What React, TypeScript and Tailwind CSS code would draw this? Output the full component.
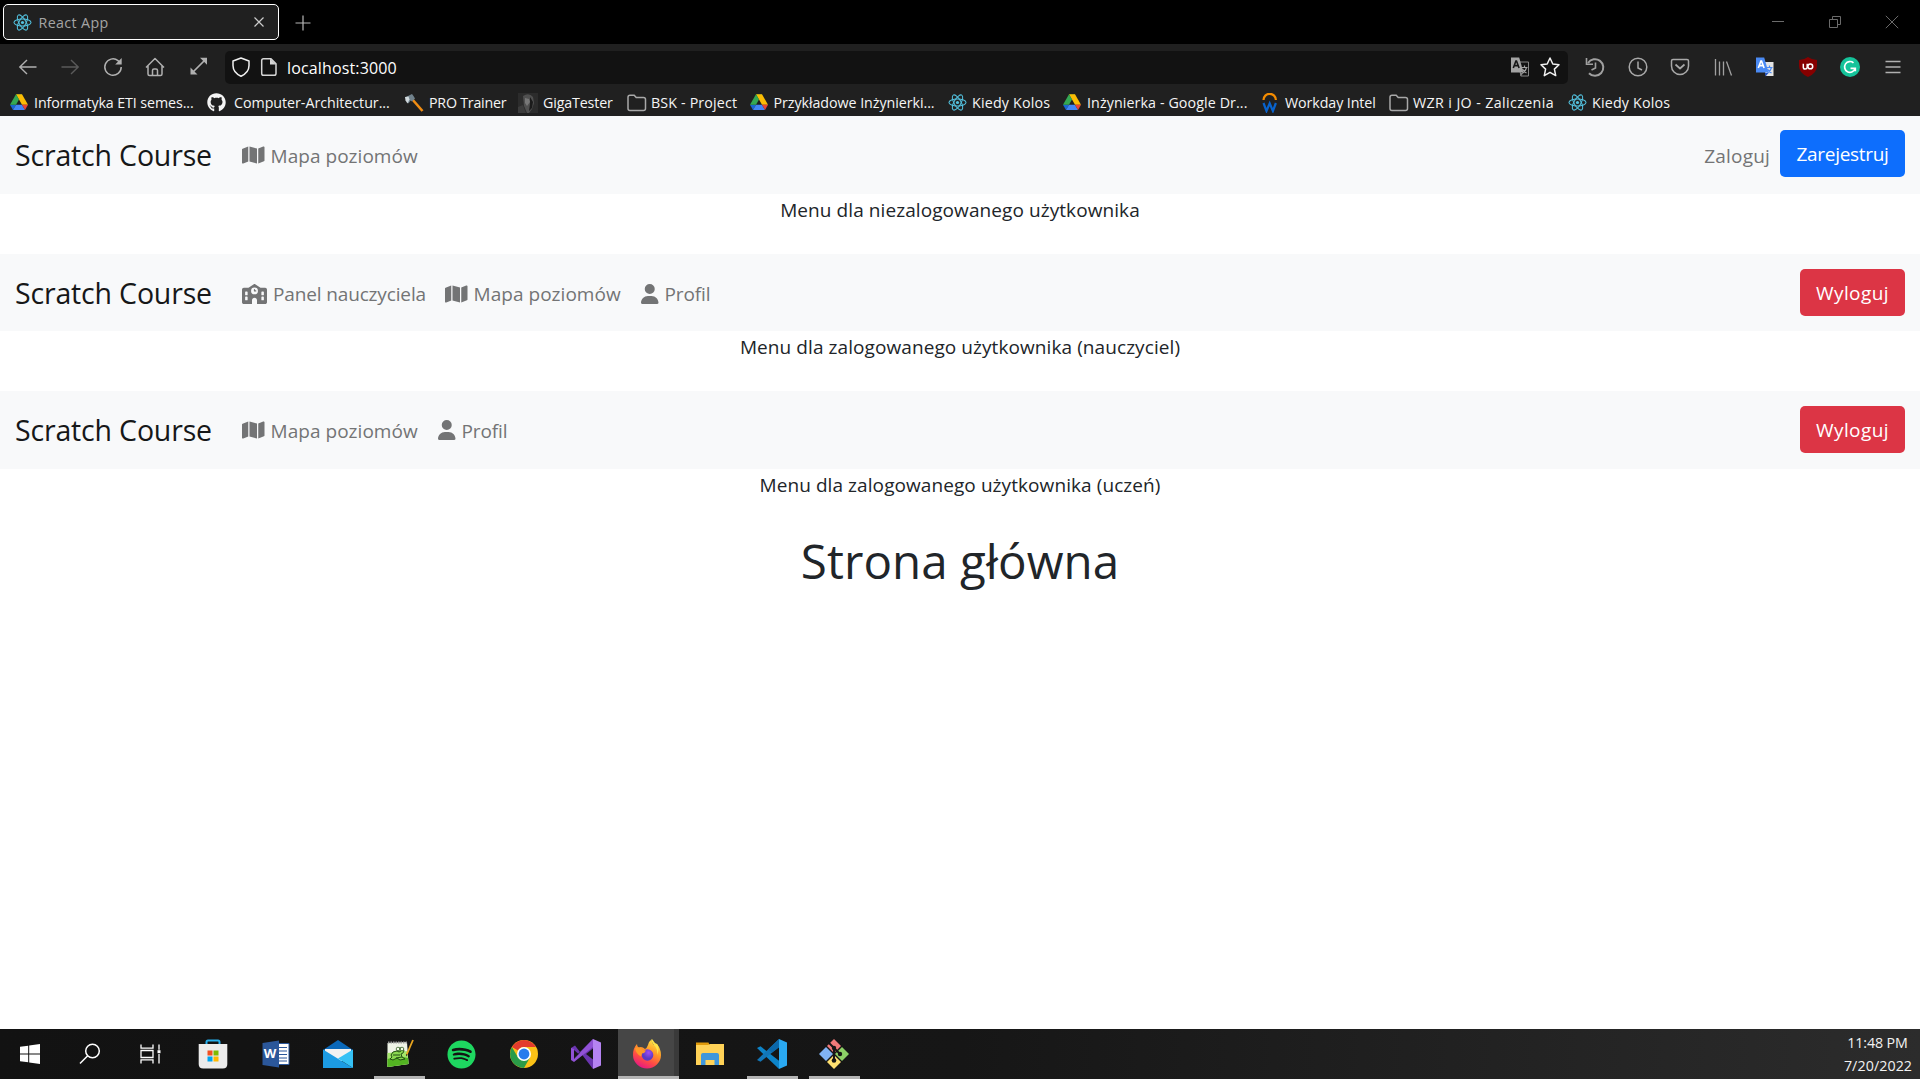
import React from 'react';
import { FaGithub, FaMap, FaSchool, FaSpotify, FaUser } from 'react-icons/fa6';

type SvgProps = { className?: string };

function ReactLogo({ className = 'size-[19px]' }: SvgProps) {
  return (
    <svg viewBox="0 0 20 20" className={className} fill="none" stroke="#53c1de" strokeWidth="1.1">
      <ellipse cx="10" cy="10" rx="9" ry="3.6" />
      <ellipse cx="10" cy="10" rx="9" ry="3.6" transform="rotate(60 10 10)" />
      <ellipse cx="10" cy="10" rx="9" ry="3.6" transform="rotate(120 10 10)" />
      <circle cx="10" cy="10" r="1.7" fill="#53c1de" stroke="none" />
    </svg>
  );
}

function Drive() {
  return (
    <svg viewBox="0 0 18 16" className="h-[16.5px] w-[18px]">
      <path d="M6 0h6L9 5.3z" fill="#188038" />
      <path d="M12 0 18 10.5h-6L6 0z" fill="#fbbc04" />
      <path d="M0 10.5h6L3 15.7z" fill="#1967d2" />
      <path d="M6 10.5h6l3 5.2H3z" fill="#4285f4" />
      <path d="M12 10.5h6l-3 5.2z" fill="#ea4335" />
      <path d="M6 0 9 5.2 6 10.5H0z" fill="#34a853" />
    </svg>
  );
}

function Axe() {
  return (
    <svg viewBox="0 0 20 20" className="size-5">
      <path d="m8 6 10.5 12" stroke="#f18d13" strokeWidth="2.6" />
      <path d="M2 4 7 1.5 8 1l1.500 2 1.500 2.500-3 3-1.500-1-2 3-2-3z" fill="#71828c" />
      <path d="M1 4 4.500 3.500l1 3-2 4-2-3z" fill="#cfd8dc" />
    </svg>
  );
}

function Portrait() {
  return (
    <svg viewBox="0 0 20 20" className="size-5">
      <rect width="20" height="20" fill="#2c2c2c" />
      <path d="M5 3q6-4 10 1l1 6-2 6-3 4H9L6 13z" fill="#505050" />
      <path d="m7 5 4 1 1 3-3 4-2-3z" fill="#777" />
      <path d="m12 4 3 5-1 6-3 3 1-7z" fill="#1b1b1b" />
      <path d="m0 14 5-2 3 8H0z" fill="#3c3c3c" />
    </svg>
  );
}

function Folder() {
  return (
    <svg viewBox="0 0 20 20" className="size-5" fill="none" stroke="#a8a8a8" strokeWidth="1.5">
      <path d="M1 4.2Q1 2.2 3 2.2h4.2l2 2.3H16.5q2 0 2 2v9q0 2-2 2H3q-2 0-2-2z" />
    </svg>
  );
}

function Workday() {
  return (
    <svg viewBox="0 0 20 20" className="size-5" fill="none">
      <path d="M3.5 7a6.2 6.2 0 0 1 12.400 0" stroke="#f38b00" strokeWidth="2.2" />
      <path d="m3.500 10 3 8 3.200-7.600 3.200 7.600 3-8" stroke="#0863ce" strokeWidth="2.200" />
    </svg>
  );
}

const bookmarks = [
  { label: 'Informatyka ETI semes...', icon: <Drive />, box: 'w-[197px] gap-[5px]', track: 'tracking-[-0.09px]' },
  { label: 'Computer-Architectur...', icon: <FaGithub className="size-[19px] text-[#f4f4f4]" />, box: 'w-[198px] gap-[8px]', track: 'tracking-[-0.03px]' },
  { label: 'PRO Trainer', icon: <Axe />, box: 'w-[114px] gap-[5px]', track: 'tracking-[-0.24px]' },
  { label: 'GigaTester', icon: <Portrait />, box: 'w-[109px] gap-[5px]', track: 'tracking-[-0.15px]' },
  { label: 'BSK - Project', icon: <Folder />, box: 'w-[122px] gap-[4px]', track: 'tracking-[0.15px]' },
  { label: 'Przykładowe Inżynierki...', icon: <Drive />, box: 'w-[198px] gap-[4.5px]', track: 'tracking-[-0.05px]' },
  { label: 'Kiedy Kolos', icon: <ReactLogo />, box: 'w-[115px] gap-[5px]', track: 'tracking-[0.2px]' },
  { label: 'Inżynierka - Google Dr...', icon: <Drive />, box: 'w-[198px] gap-[5px]', track: 'tracking-[0.1px]' },
  { label: 'Workday Intel', icon: <Workday />, box: 'w-[129px] gap-[5px]', track: 'tracking-[-0.09px]' },
  { label: 'WZR i JO - Zaliczenia', icon: <Folder />, box: 'w-[178px] gap-[4px]', track: 'tracking-[0.38px]' },
  { label: 'Kiedy Kolos', icon: <ReactLogo />, box: 'w-[115px] gap-[5px]', track: 'tracking-[0.2px]' },
];

function TitleBar() {
  return (
    <div className="flex h-11 items-center bg-black">
      <div className="ml-[3px] flex h-9 w-[276px] items-center rounded-[5px] border border-white bg-[#202020] pl-[9px] pr-[13px]">
        <ReactLogo />
        <span className="ml-[6.5px] flex-1 pt-[2px] text-[14.25px] tracking-[0.37px] text-[#a5a5a5]">React App</span>
        <svg viewBox="0 0 12 12" className="size-3" stroke="#ccc" strokeWidth="1.2">
          <path d="m1.5 1.5 9 9m0-9-9 9" />
        </svg>
      </div>
      <svg viewBox="0 0 16 16" className="ml-[15.500px] mt-px size-4" stroke="#b8b8b8" strokeWidth="1.2">
        <path d="M8 .5v15M.5 8h15" />
      </svg>
      <div className="ml-auto flex pr-[21px]">
        <svg viewBox="0 0 14 14" className="mr-[43px] size-3.5" stroke="#6b6b6b"><path d="M1 6.5h12" /></svg>
        <svg viewBox="0 0 14 14" className="mr-[43px] size-3.5" fill="none" stroke="#6b6b6b"><path d="M1.5 4.5h8v8h-8zM4.5 4V1.500h8v8H10" /></svg>
        <svg viewBox="0 0 14 14" className="size-3.5" stroke="#6b6b6b"><path d="m.8.800 12.400 12.400m0-12.400L.8 13.200" /></svg>
      </div>
    </div>
  );
}

function TranslateIcon({ color }: { color: boolean }) {
  const front = color ? '#4a8af4' : '#a3a3a3';
  const back = color ? '#e4e4e4' : '#121212';
  const glyph = color ? '#4a8af4' : '#a3a3a3';
  return (
    <svg viewBox="0 0 20 20" className="size-5">
      <path d="M8 5h10.500v14H11z" fill={back} stroke={color ? 'none' : '#858585'} strokeWidth="1" />
      <path d="M11.500 10.500h6M14.500 8.500v2m2 0q-1 4-4 5.500m0-4q1 2.500 4 4" fill="none" stroke={glyph} strokeWidth="1.2" />
      <path d="m10 16 3.500 0-3 3.500z" fill={color ? '#2555c4' : '#858585'} />
      <path d="M1 .5h8.200l4.300 15H1z" fill={front} />
      <path d="m3.300 11 2.600-7h.6l2.600 7M4.300 8.600h3.800" fill="none" stroke={color ? '#fff' : '#161616'} strokeWidth="1.6" />
    </svg>
  );
}

function Toolbar() {
  return (
    <div className="flex h-[45px] items-center pt-[1px]">
      <div className="flex w-[225px] items-center">
        <svg viewBox="0 0 20 20" className="ml-[18px] size-5" fill="none" stroke="#b0b0b0" strokeWidth="1.400"><path d="M18.500 10H2M9 3l-7.200 7L9 17" /></svg>
        <svg viewBox="0 0 20 20" className="ml-[22px] size-5" fill="none" stroke="#5a5a5a" strokeWidth="1.400"><path d="M1.500 10H18M11 3l7.200 7-7.200 7" /></svg>
        <svg viewBox="0 0 20 20" className="ml-[23px] size-5" fill="none" stroke="#b0b0b0" strokeWidth="1.500"><path d="M18.200 10A8.200 8.200 0 1 1 15 3.600l2 2" /><path d="M18.700 1v6.500h-6.500z" fill="#b0b0b0" stroke="none" /></svg>
        <svg viewBox="0 0 20 20" className="ml-[21.500px] size-5" fill="none" stroke="#b0b0b0" strokeWidth="1.500" strokeLinejoin="round"><path d="m1 10.500 9-9 9 9M3 8.800V17q0 1.500 1.500 1.500h11Q17 18.500 17 17V8.800M7.500 18.500v-5q0-1.500 1.500-1.500h2q1.500 0 1.500 1.500v5" /></svg>
        <svg viewBox="0 0 20 20" className="ml-[24.500px] size-5" fill="#b0b0b0"><path d="M18 .8v7L11 .8zM1.500 17.500v-7l7 7z" /><path d="m3.500 15.500 12.500-12.500" stroke="#b0b0b0" strokeWidth="1.700" /></svg>
      </div>
      <div className="flex h-[33px] w-[1343px] items-center rounded-[5px] bg-[#121212]">
        <svg viewBox="0 0 20 20" className="ml-[6px] size-5" fill="none" stroke="#f0f0f0" strokeWidth="1.500" strokeLinejoin="round"><path d="M10 1 18 4v4.500q0 7-8 10.700Q2 15.500 2 8.500V4z" /></svg>
        <svg viewBox="0 0 20 20" className="ml-[8px] size-5" fill="none" stroke="#d5d5d5" strokeWidth="1.500" strokeLinejoin="round"><path d="M4.500 1.800h7.500l5 5v9.700q0 1.800-1.800 1.800H4.500q-1.800 0-1.800-1.800V3.600q0-1.800 1.800-1.800z" /><path d="M11 1.500v6h6z" fill="#d5d5d5" stroke="none" /></svg>
        <span className="ml-[8px] pt-[2px] text-[16px] tracking-[0.150px] text-white">localhost:3000</span>
        <div className="ml-auto mr-[8px] flex gap-[10px]">
          <TranslateIcon color={false} />
          <svg viewBox="0 0 20 20" className="size-5" fill="none" stroke="#f0f0f0" strokeWidth="1.500" strokeLinejoin="round"><path d="m10 1 2.800 6 6.200.7-4.600 4.400 1.300 6.500L10 15.300l-5.700 3.300 1.300-6.500L1 7.700 7.200 7z" /></svg>
        </div>
      </div>
      <div className="ml-[17px] flex items-center gap-[22.500px]">
        <svg viewBox="0 0 20 20" className="size-5" fill="none" stroke="#a0a0a0" strokeWidth="2"><path d="M3 6A8.300 8.300 0 1 1 4 16.200" /><path d="M1.500 1v6.200h6.500" strokeWidth="1.600" /><path d="M10.500 5.500V11l-4 2" strokeWidth="1.600" /></svg>
        <svg viewBox="0 0 20 20" className="size-5" fill="none" stroke="#a8a8a8" strokeWidth="1.500"><circle cx="10" cy="10" r="8.800" /><path d="M10 4.500V11l4 2" /></svg>
        <svg viewBox="0 0 20 20" className="size-5" fill="none" stroke="#a8a8a8" strokeWidth="1.500" strokeLinejoin="round"><path d="M3 2.500h14q1.500 0 1.500 1.500v5a8.500 8.500 0 0 1-17 0V4q0-1.500 1.500-1.500z" /><path d="m5.500 7.500 4.500 4 4.500-4" strokeWidth="1.700" /></svg>
        <svg viewBox="0 0 20 20" className="size-5" fill="none" stroke="#a0a0a0" strokeWidth="1.300"><path d="M2.500 2v16.500M6.500 4.500v14M10.500 4.500v14M13.500 4.500l5 14" /></svg>
        <TranslateIcon color />
        <svg viewBox="0 0 20 20" className="size-5"><path d="M10 0Q14 3 19 3v6q0 7-9 11-9-4-9-11V3q5 0 9-3z" fill="#860000" /><path d="M5.300 6.800v3.400q0 1.800 1.900 1.800t2-1.800V6.800" fill="none" stroke="#fff" strokeWidth="1.500" /><circle cx="12.300" cy="9.400" r="2.400" fill="none" stroke="#fff" strokeWidth="1.500" /></svg>
        <svg viewBox="0 0 20 20" className="size-5"><circle cx="10" cy="10" r="10" fill="#15c39a" /><path d="M13.500 5.800A5.400 5.400 0 1 0 15 12M10.500 11.300h4.800v3" fill="none" stroke="#fff" strokeWidth="1.700" /></svg>
        <svg viewBox="0 0 20 20" className="size-5" stroke="#b0b0b0" strokeWidth="1.300"><path d="M2.500 4.500h15M2.500 10h15M2.500 15.500h15" /></svg>
      </div>
    </div>
  );
}

function BookmarkBar() {
  return (
    <div className="flex h-[27px] items-center pl-[9px]">
      {bookmarks.map((b, i) => (
        <div key={i} className={`flex shrink-0 items-center whitespace-nowrap text-[14.25px] text-[#f5f5f5] ${b.box}`}>
          <span className="flex size-5 items-center justify-center">{b.icon}</span>
          <span className={b.track}>{b.label}</span>
        </div>
      ))}
    </div>
  );
}

function NavLink({ icon, label, width, track }: { icon: React.ReactNode; label: string; width: string; track: string }) {
  return (
    <a className={`flex items-center gap-[6px] whitespace-nowrap text-[#737475] ${width}`}>
      {icon}
      <span className={`pt-[2px] text-[19px] ${track}`}>{label}</span>
    </a>
  );
}

const teacher = (
  <NavLink icon={<FaSchool className="h-5 w-[25px]" />} label="Panel nauczyciela" width="w-[203px]" track="tracking-[-0.14px]" />
);
const levels = (
  <NavLink icon={<FaMap className="h-5 w-[22.5px]" />} label="Mapa poziomów" width="w-[196px]" track="tracking-[0.04px]" />
);
const profile = (
  <NavLink icon={<FaUser className="h-5 w-[17.5px]" />} label="Profil" width="w-[100px]" track="tracking-[-0.12px]" />
);

function Navbar({ links, actions, height = 'h-[78px]', shift = '' }: { links: React.ReactNode; actions: React.ReactNode; height?: string; shift?: string }) {
  return (
    <nav className={`flex items-center bg-[#f8f9fa] px-[15px] ${height}`}>
      <span className="w-[227px] pt-[1px] text-[28.5px] tracking-[-0.17px] text-[#161718]">Scratch Course</span>
      <div className={`flex ${shift}`}>{links}</div>
      <div className="ml-auto flex items-center">{actions}</div>
    </nav>
  );
}

function Caption({ children }: { children: React.ReactNode }) {
  return <p className="h-[60px] pt-[1px] text-center text-[19px] leading-[30px] tracking-[0.08px] text-[#212529]">{children}</p>;
}

function Logout() {
  return (
    <button className="h-[47px] w-[105px] rounded-[5px] bg-[#dc3545] pt-[2px] text-[19px] tracking-[0.4px] text-white">Wyloguj</button>
  );
}

function Task({ children, open, width = 'w-[62.1px]' }: { children: React.ReactNode; open?: boolean; width?: string }) {
  return (
    <div className={`relative flex h-full items-center justify-center ${width}`}>
      {children}
      {open && <span className="absolute bottom-0 left-[5.5px] h-[3px] w-[51px] bg-[#b4b4b4]" />}
    </div>
  );
}

function Taskbar() {
  return (
    <footer className="flex h-[50px] items-center bg-linear-to-r from-[#121212] via-[#161616] to-[#2c2c2c]">
      <Task width="w-[60px]">
        <svg viewBox="0 0 20 20" className="size-5" fill="#fff"><path d="M0 2.800 8.200 1.700v7.800H0zM9.200 1.500 20 0v9.500H9.200zM0 10.500h8.200v7.800L0 17.200zM9.200 10.500H20V20L9.200 18.500z" /></svg>
      </Task>
      <Task width="w-[60px]">
        <svg viewBox="0 0 22 22" className="size-[22px]" fill="none" stroke="#fff" strokeWidth="1.5"><circle cx="13.500" cy="8" r="6.800" /><path d="M8.700 12.800 1 20.500" /></svg>
      </Task>
      <Task width="w-[62.5px]">
        <svg viewBox="0 0 22 20" className="-ml-px h-5 w-[22px]" fill="none" stroke="#fff" strokeWidth="1.3"><path d="M1 .5v3.700h12V.5M1 19.500v-3.700h12v3.700M1 6.500h12v7H1zM19 .5v5.200M19 10v9.500" /><path d="M17.500 6.200h3v3h-3z" fill="#fff" stroke="none" /></svg>
      </Task>
      <Task>
        <svg viewBox="0 0 30 30" className="-ml-px size-[30px]"><path d="M8.500 7V3q0-1.500 1.500-1.500h10q1.500 0 1.500 1.500v4" fill="none" stroke="#28aeea" strokeWidth="2" /><path d="M.7 5h28.600v20q0 4.500-4.500 4.500H5.200Q.7 29.500.7 25z" fill="#ececec" /><path d="M9.500 11.500h5v5h-5z" fill="#f25022" /><path d="M15.500 11.500h5v5h-5z" fill="#7fba00" /><path d="M9.500 17.500h5v5h-5z" fill="#00a4ef" /><path d="M15.500 17.500h5v5h-5z" fill="#ffb900" /></svg>
      </Task>
      <Task>
        <div className="relative flex size-[28px] items-center">
          <svg viewBox="0 0 28 28" className="size-[28px]"><path d="M14 3.500h13v21H14z" fill="#fff" stroke="#2b579a" /><path d="M17 7.500h8M17 11h8M17 14.500h8M17 18h8M17 21h8" stroke="#2b579a" strokeWidth="1.2" /><path d="M.5 3 17 .5v27L.5 25z" fill="#2b579a" /></svg>
          <span className="absolute left-[2px] text-[13px] font-bold text-white">W</span>
        </div>
      </Task>
      <Task>
        <svg viewBox="0 0 30 30" className="size-[30px]"><path d="M0 11 15 1l15 10v5H0z" fill="#0a68b9" /><path d="M2 10h26v12H2z" fill="#f2f2f2" /><path d="M0 29h30L0 10.500z" fill="#1c9be3" /><path d="m15 19.500 15 9.500V10.500z" fill="#35c1f5" /></svg>
      </Task>
      <Task open>
        <svg viewBox="0 0 30 30" className="size-[30px]">
          <path d="M2.500 4 22 3l1.500 22-21 3z" fill="#eef3e6" />
          <path d="m2.500 14 20-2 1 13-21 3z" fill="#a4e56a" />
          <path d="M2.500 20q10-4 20.500-1l.5 6-21 3z" fill="#53b422" />
          <path d="M3 3.500h19" stroke="#9a9a9a" strokeWidth="2" strokeDasharray="1.500 1" />
          <path d="M6 16q1-4 6-4 1-4 4-3 3 0 3 3-1 3-3 3l1 3 3 2-5 1-3-2-4 2-3-1 2-2z" fill="#8ad850" stroke="#234d14" strokeWidth="1" />
          <path d="M12 12q2 2 4 0M8 16h7M11 19l6-1" fill="none" stroke="#234d14" />
          <circle cx="13" cy="10" r="1.800" fill="#f4fbe9" stroke="#234d14" strokeWidth=".7" />
          <circle cx="17" cy="10" r="1.800" fill="#f4fbe9" stroke="#234d14" strokeWidth=".7" />
          <path d="m21.500 16 6.500-15" stroke="#e9a51f" strokeWidth="1.800" />
          <path d="m21 17.500.3-2.500 1.500.8z" fill="#222" />
        </svg>
      </Task>
      <Task>
        <FaSpotify className="size-[29px] text-[#1ed760]" />
      </Task>
      <Task>
        <svg viewBox="0 0 28 28" className="size-[28px]"><circle cx="14" cy="14" r="14" fill="#fbc116" /><path d="M1.900 7A14 14 0 0 0 14 28l6-10.500H8z" fill="#2a9c48" /><path d="M8 10.500 1.900 7A14 14 0 0 1 26.100 7H14a7 7 0 0 0-6 3.500z" fill="#e33b2e" /><circle cx="14" cy="14" r="7" fill="#fff" /><circle cx="14" cy="14" r="5.400" fill="#277ced" /></svg>
      </Task>
      <Task>
        <svg viewBox="0 0 30 30" className="size-[30px]"><path d="M22 0 30 3.500v23L22 30z" fill="#b583f2" /><path d="m22 0-18 18-4 2.500V9l4-2.500L22 30v-8.500z" fill="#6a35b0" /><path d="M0 9v12l3 2 19-15V0L3 20V10z" fill="#9152d6" /><path d="m3 11 4.500 4L3 19z" fill="#161616" /><path d="M22 9.500v11L15 15z" fill="#161616" /></svg>
      </Task>
      <div className="relative mx-[0.5px] flex h-full w-[61px] bg-[#3a3a3a]">
        <div className="flex w-[56px] items-center justify-center bg-[#464646]">
          <svg viewBox="0 0 30 30" className="ml-[3px] size-[30px]">
            <defs>
              <linearGradient id="fox" x1=".8" y1="0" x2=".3" y2="1"><stop offset="0" stopColor="#fff04a" /><stop offset=".4" stopColor="#ff9a27" /><stop offset=".7" stopColor="#ff4b45" /><stop offset="1" stopColor="#e31587" /></linearGradient>
              <radialGradient id="globe" cx=".6" cy=".3"><stop offset="0" stopColor="#a14bf4" /><stop offset="1" stopColor="#5a3bc4" /></radialGradient>
            </defs>
            <path d="M1 16Q1 9 5 5q0 2 1.500 3.500Q10 7 13 10q2-1 3-4 1-4 4-6-1 3 2 6l3-1Q29 10 29 16a14 13.500 0 0 1-28 0z" fill="url(#fox)" />
            <circle cx="15.500" cy="16" r="5.800" fill="url(#globe)" />
            <path d="M3 9q5-2 8 2l3 .5q-1 2.500-4 3l-1 3Q4 15 3 9z" fill="#ff9a27" />
            <path d="M20 0q-1 3 2 6 4 4 3 10 3-7 0-11l-2-1z" fill="#ffe34a" />
          </svg>
        </div>
        <span className="absolute bottom-0 left-0 h-[3px] w-[61px] bg-[#b4b4b4]" />
      </div>
      <Task>
        <svg viewBox="0 0 28 26" className="h-[26px] w-[28px]"><path d="M0 1.500h12.500L14 5H0z" fill="#e09a0b" /><path d="M0 4h12l2-1h14v21H0z" fill="#ffd257" /><path d="M5 24V14q0-2 2-2h14q2 0 2 2v10h-4.500v-5h-9v5z" fill="#3f97dc" /></svg>
      </Task>
      <Task open>
        <svg viewBox="0 0 30 30" className="size-[30px]"><path d="M22 0 30 3.500v23L22 30z" fill="#2aa9f2" /><path d="M22 21.800 3.500 7.200 0 9l22 21z" fill="#0d84c9" /><path d="M22 8.200 3.500 22.800 0 21 22 0z" fill="#1276b8" /><path d="M22 0v8.200L15 13.500l-4-3z" fill="#0b68ab" /></svg>
      </Task>
      <Task open>
        <svg viewBox="0 0 30 30" className="size-[30px]"><path d="m15 0 7 7-7 7-7-7z" fill="#f27a7a" /><path d="m7 8 7 7-7 7-7-7z" fill="#80b3f5" /><path d="m23 8 7 7-7 7-7-7z" fill="#8cd066" /><path d="m15 16 7 7-7 7-7-7z" fill="#ffe070" /><path d="m10 4 5 5v13M15 9l6 6" fill="none" stroke="#161616" strokeWidth="2" /><circle cx="15" cy="9" r="2.200" fill="#161616" /><circle cx="15" cy="21.500" r="2.300" fill="#161616" /><circle cx="21" cy="15" r="2.200" fill="#161616" /></svg>
      </Task>
      <div className="ml-auto mr-[4px] w-[76px] whitespace-nowrap text-center text-[14.25px] leading-[23px] text-[#f2f2f2]">
        <div className="pr-[1px] tracking-[-0.11px]">11:48 PM</div>
        <div className="tracking-[0.08px]">7/20/2022</div>
      </div>
    </footer>
  );
}

export default function App() {
  return (
    <div className="flex h-[1079px] w-[1920px] flex-col overflow-hidden bg-white font-['Open_Sans','Noto_Sans',sans-serif]">
      <header className="h-[116px] shrink-0 bg-[#202020]">
        <TitleBar />
        <Toolbar />
        <BookmarkBar />
      </header>
      <main className="flex-1">
        <Navbar
          links={levels}
          actions={
            <>
              <span className="mr-[10px] pt-[2px] text-[19px] tracking-[0.2px] text-[#737475]">Zaloguj</span>
              <button className="mb-[3px] h-[47px] w-[125px] rounded-[5px] bg-[#0d6efd] pt-[2px] text-[19px] tracking-[-0.31px] text-white">Zarejestruj</button>
            </>
          }
        />
        <Caption>Menu dla niezalogowanego użytkownika</Caption>
        <Navbar height="h-[77px]" shift="pt-[2px]" links={<>{teacher}{levels}{profile}</>} actions={<Logout />} />
        <Caption>Menu dla zalogowanego użytkownika (nauczyciel)</Caption>
        <Navbar links={<>{levels}{profile}</>} actions={<div className="pb-px"><Logout /></div>} />
        <Caption>Menu dla zalogowanego użytkownika (uczeń)</Caption>
        <h1 className="pt-[2px] text-center text-[47.5px] leading-[60px] tracking-[0.07px] text-[#212529]">Strona główna</h1>
      </main>
      <Taskbar />
    </div>
  );
}
